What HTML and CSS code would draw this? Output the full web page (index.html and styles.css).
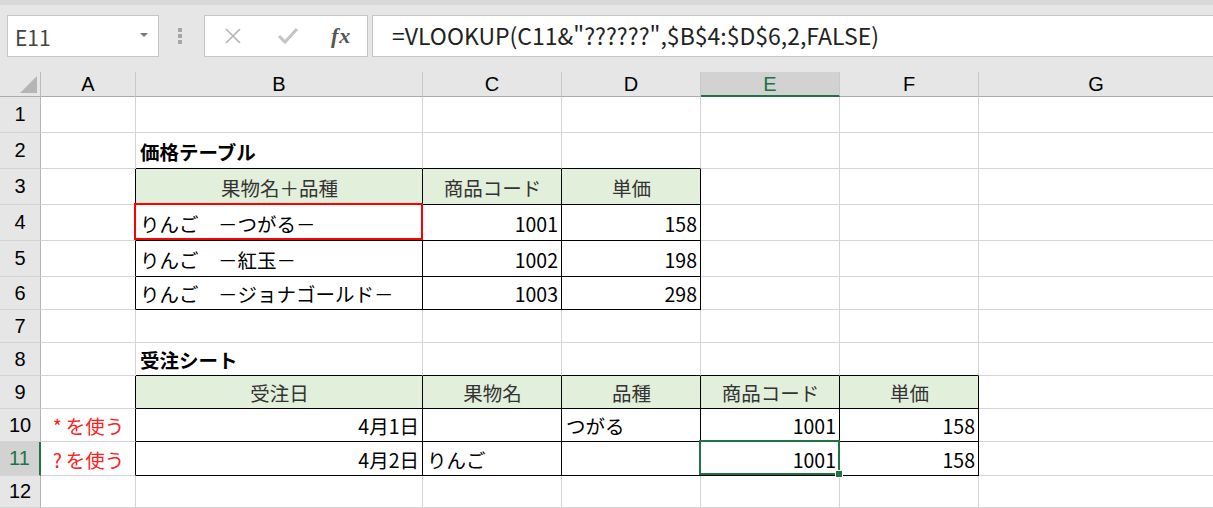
FILE: index.html
```html
<!DOCTYPE html>
<html lang="ja">
<head>
  <meta charset="UTF-8" />
  <title>VLOOKUP ワイルドカード</title>
  <link rel="stylesheet" href="styles.css">
</head>
<body>
  <div class="toolbar">
    <div class="namebox">
      <span>E11</span>
      <span class="caret"></span>
    </div>
    <div class="grip"><i></i><i></i><i></i></div>
    <div class="fx-buttons">
      <svg class="icon" width="20" height="20" viewBox="0 0 20 20">
        <path d="M3 3 L17 17 M17 3 L3 17" stroke="#b3b3b3" stroke-width="1.6" fill="none" />
      </svg>
      <svg class="icon" width="22" height="20" viewBox="0 0 22 20">
        <path d="M2 10 L8 16 L20 3" stroke="#c4c4c4" stroke-width="3" fill="none" />
      </svg>
      <span class="fx">fx</span>
    </div>
    <div class="formula">=VLOOKUP(C11&amp;"??????",$B$4:$D$6,2,FALSE)</div>
  </div>

  <div class="sheet">
    <div class="corner"><span class="tri"></span></div>
    <div class="colhead">A</div><div class="colhead">B</div><div class="colhead">C</div><div class="colhead">D</div>
    <div class="colhead active">E</div><div class="colhead">F</div><div class="colhead last">G</div>

    <div class="rowhead">1</div>
    <div class="c"></div><div class="c"></div><div class="c"></div><div class="c"></div><div class="c"></div><div class="c"></div><div class="c last"></div>

    <div class="rowhead">2</div>
    <div class="c"></div><div class="c tb title">価格テーブル</div><div class="c tb"></div><div class="c tb"></div><div class="c"></div><div class="c"></div><div class="c last"></div>

    <div class="rowhead">3</div>
    <div class="c tr"></div><div class="c t h">果物名＋品種</div><div class="c t h">商品コード</div><div class="c t h">単価</div><div class="c"></div><div class="c"></div><div class="c last"></div>

    <div class="rowhead">4</div>
    <div class="c tr"></div><div class="c t mark">りんご　－つがる－</div><div class="c t r">1001</div><div class="c t r">158</div><div class="c"></div><div class="c"></div><div class="c last"></div>

    <div class="rowhead">5</div>
    <div class="c tr"></div><div class="c t">りんご　－紅玉－</div><div class="c t r">1002</div><div class="c t r">198</div><div class="c"></div><div class="c"></div><div class="c last"></div>

    <div class="rowhead">6</div>
    <div class="c tr"></div><div class="c t">りんご　－ジョナゴールド－</div><div class="c t r">1003</div><div class="c t r">298</div><div class="c"></div><div class="c"></div><div class="c last"></div>

    <div class="rowhead">7</div>
    <div class="c"></div><div class="c"></div><div class="c"></div><div class="c"></div><div class="c"></div><div class="c"></div><div class="c last"></div>

    <div class="rowhead">8</div>
    <div class="c"></div><div class="c tb title">受注シート</div><div class="c tb"></div><div class="c tb"></div><div class="c tb"></div><div class="c tb"></div><div class="c last"></div>

    <div class="rowhead">9</div>
    <div class="c tr"></div><div class="c t h">受注日</div><div class="c t h">果物名</div><div class="c t h">品種</div><div class="c t h">商品コード</div><div class="c t h">単価</div><div class="c last"></div>

    <div class="rowhead">10</div>
    <div class="c tr note">*&thinsp;を使う</div><div class="c t r">4月1日</div><div class="c t"></div><div class="c t">つがる</div><div class="c t r">1001</div><div class="c t r">158</div><div class="c last"></div>

    <div class="rowhead active">11</div>
    <div class="c tr note">?&thinsp;を使う</div><div class="c t r">4月2日</div><div class="c t">りんご</div><div class="c t"></div><div class="c t r selected">1001<span class="handle"></span></div><div class="c t r">158</div><div class="c last"></div>

    <div class="rowhead">12</div>
    <div class="c"></div><div class="c"></div><div class="c"></div><div class="c"></div><div class="c"></div><div class="c"></div><div class="c last"></div>
  </div>
</body>
</html>
```

FILE: styles.css
```css
body {
  margin: 0;
  background: #fff;
  font-family: "Noto Sans CJK JP", "Noto Sans", sans-serif;
  overflow: hidden;
}

/* 数式バー */
.toolbar {
  height: 72px;
  box-sizing: border-box;
  padding: 15px 0 15px 7px;
  display: flex;
  align-items: stretch;
  background: linear-gradient(#d9d9d9 0, #d9d9d9 5px, #e6e6e6 5px);
}

.namebox {
  width: 152px;
  box-sizing: border-box;
  background: #fff;
  border: 1px solid #c6c6c6;
  display: flex;
  align-items: center;
  justify-content: space-between;
  padding: 2px 10px 0 7px;
  font-size: 21px;
  color: #444;
}

.caret {
  width: 0;
  height: 0;
  border-left: 4px solid transparent;
  border-right: 4px solid transparent;
  border-top: 4px solid #777;
  margin-top: -4px;
}

.grip {
  width: 4px;
  margin: 0 22px 0 19px;
  display: flex;
  flex-direction: column;
  justify-content: center;
  gap: 2px;
}

.grip i {
  display: block;
  width: 4px;
  height: 4px;
  background: #a6a6a6;
}

.fx-buttons {
  width: 164px;
  box-sizing: border-box;
  background: #fff;
  border: 1px solid #c6c6c6;
  display: flex;
  align-items: center;
  padding: 0 0 0 18px;
}

.fx-buttons .icon:first-child {
  margin-right: 34px;
}

.fx-buttons .icon + .icon {
  margin-right: 32px;
}

.fx {
  font-family: "Liberation Serif", serif;
  font-style: italic;
  font-weight: bold;
  font-size: 22px;
  color: #555;
  letter-spacing: 1px;
}

.formula {
  flex: 1;
  margin-left: 4px;
  background: #fff;
  border: 1px solid #c6c6c6;
  border-right: none;
  padding: 0 0 2px 19px;
  display: flex;
  align-items: center;
  font-size: 23px;
  color: #222;
  white-space: nowrap;
}

/* シート */
.sheet {
  display: grid;
  grid-template-columns: 41px 95px 287px 139px 139px 139px 139px 1fr;
  grid-template-rows: 25px 36px 36px 36px 36px 36px 33px 33px 33px 33px 33px 34px 32px;
}

.sheet > div {
  box-sizing: border-box;
  position: relative;
}

.corner {
  background: #e6e6e6;
  border-right: 1px solid #bcbcbc;
  border-bottom: 1px solid #ababab;
}

.tri {
  position: absolute;
  right: 3px;
  bottom: 3px;
  width: 0;
  height: 0;
  border-left: 17px solid transparent;
  border-bottom: 17px solid #b5b5b5;
}

.colhead {
  background: #e6e6e6;
  border-right: 1px solid #c8c8c8;
  border-bottom: 1px solid #ababab;
  display: flex;
  align-items: center;
  justify-content: center;
  font-family: "Liberation Sans", Arial, sans-serif;
  font-size: 20px;
  color: #000;
  padding-top: 1px;
}

.colhead.active {
  background: #d2d2d2;
  color: #217346;
  border-bottom: 2px solid #217346;
}

.rowhead {
  background: #e6e6e6;
  border-right: 1px solid #b4b4b4;
  border-bottom: 1px solid #d4d4d4;
  display: flex;
  align-items: center;
  justify-content: center;
  font-family: "Liberation Sans", Arial, sans-serif;
  font-size: 20px;
  color: #000;
}

.rowhead.active {
  background: #d2d2d2;
  color: #217346;
  border-right: 2px solid #217346;
}

.c {
  border-right: 1px solid #d4d4d4;
  border-bottom: 1px solid #d4d4d4;
  display: flex;
  align-items: center;
  padding: 1px 3px 0 4px;
  font-size: 19.5px;
  color: #000;
  white-space: nowrap;
}

.sheet > .last {
  border-right: none;
}

.c.tr {
  border-right-color: #000;
}

.c.tb {
  border-bottom-color: #000;
}

.c.t {
  border-right-color: #000;
  border-bottom-color: #000;
}

.c.h {
  background: #e2efda;
  justify-content: center;
  color: #333;
}

.c.r {
  justify-content: flex-end;
}

.title {
  font-weight: bold;
}

.note {
  justify-content: center;
  color: #ff2020;
}

.mark::after {
  content: "";
  position: absolute;
  top: -2px;
  left: -2px;
  right: -1px;
  bottom: 0;
  border: 2px solid #ff0000;
}

.selected::after {
  content: "";
  position: absolute;
  top: -2px;
  left: -2px;
  right: -1px;
  bottom: 0;
  border: 2px solid #217346;
}

.handle {
  position: absolute;
  right: -4px;
  bottom: -3px;
  width: 6px;
  height: 6px;
  background: #217346;
  border: 1px solid #fff;
  z-index: 2;
}
```
